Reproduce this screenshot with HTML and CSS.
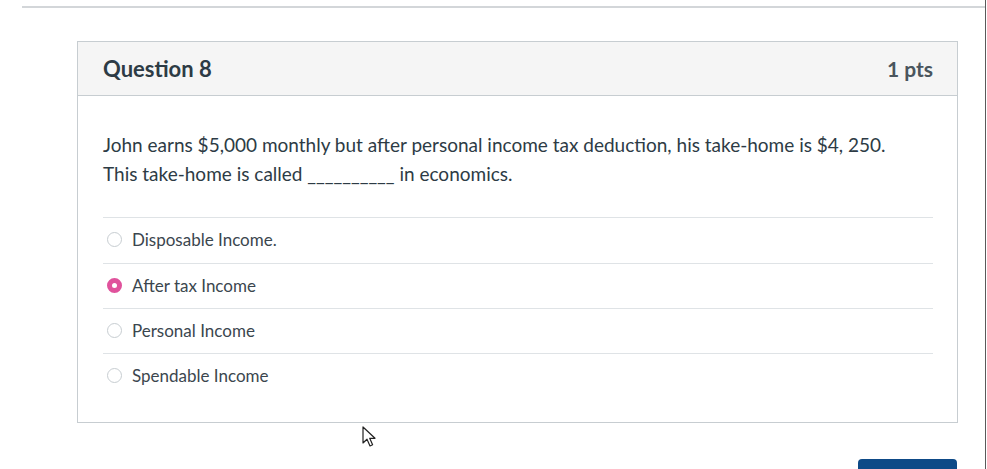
FILE: index.html
```html
<!DOCTYPE html>
<html lang="en">
<head>
    <meta charset="UTF-8">
    <meta name="viewport" content="width=device-width, initial-scale=1.0">
    <title>Quiz</title>
    <link rel="stylesheet" href="styles.css">
</head>
<body>
    <div class="screen">
        <div class="top-rule"></div>
        <div class="question">
            <div class="question-header">
                <span class="question-name">Question 8</span>
                <span class="question-points">1 pts</span>
            </div>
            <div class="question-body">
                <div class="question-text">
                    John earns $5,000 monthly but after personal income tax deduction, his take-home is $4, 250.<br>
                    This take-home is called __________ in economics.
                </div>
                <div class="answers">
                    <label class="answer"><span class="radio"></span>Disposable Income.</label>
                    <label class="answer"><span class="radio checked"></span>After tax Income</label>
                    <label class="answer"><span class="radio"></span>Personal Income</label>
                    <label class="answer"><span class="radio"></span>Spendable Income</label>
                </div>
            </div>
        </div>
        <div class="actions">
            <div class="submit-btn"></div>
        </div>
        <svg class="cursor" width="16" height="22" viewBox="0 0 16 22">
            <path d="M1 1 L1 17 L5 13.2 L8 20 L10.6 18.8 L7.7 12.3 L13 12.3 Z" fill="#fff" stroke="#222" stroke-width="1.2" stroke-linejoin="round"/>
        </svg>
    </div>
</body>
</html>
```
FILE: styles.css
```css
body {
    margin: 0;
    background: #fff;
    font-family: Lato, "Open Sans", sans-serif;
    color: #2d3b45;
    overflow: hidden;
}
.screen {
    position: relative;
    width: 985px;
    height: 469px;
    overflow: hidden;
    border-right: 1px solid #5a5a5a;
}
.top-rule {
    margin: 6px 0 0 22px;
    height: 2px;
    background: #d3d6d9;
}
.question {
    margin: 33px 27px 0 77px;
    border: 1px solid #c7cdd1;
    background: #fff;
}
.question-header {
    display: flex;
    justify-content: space-between;
    align-items: center;
    height: 53px;
    padding: 0 24px 0 25px;
    background: #f5f5f5;
    border-bottom: 1px solid #c7cdd1;
}
.question-name {
    font-size: 22px;
    font-weight: bold;
    color: #2d3b45;
}
.question-points {
    font-size: 21px;
    font-weight: bold;
    color: #4a555d;
}
.question-body {
    padding: 34px 24px 24px 25px;
}
.question-text {
    font-size: 19px;
    line-height: 29px;
    margin-bottom: 29px;
}
.answers {
    display: flex;
    flex-direction: column;
}
.answer {
    display: flex;
    align-items: center;
    height: 42px;
    padding-bottom: 2px;
    border-top: 1px solid #dfe3e6;
    font-size: 17px;
    color: #3b464e;
}
.answer:first-child {
    height: 43px;
}
.radio {
    width: 15px;
    height: 15px;
    border: 1px solid #c7cdd1;
    border-radius: 50%;
    margin: 0 10px 0 4px;
    box-sizing: border-box;
}
.radio.checked {
    border: 5px solid #e0529c;
    background: #fff;
}
.actions {
    display: flex;
    justify-content: flex-end;
    margin: 36px 28px 0 0;
}
.submit-btn {
    width: 99px;
    height: 30px;
    background: #0e4a87;
    border-radius: 4px;
}
.cursor {
    position: absolute;
    left: 362px;
    top: 426px;
}
```
